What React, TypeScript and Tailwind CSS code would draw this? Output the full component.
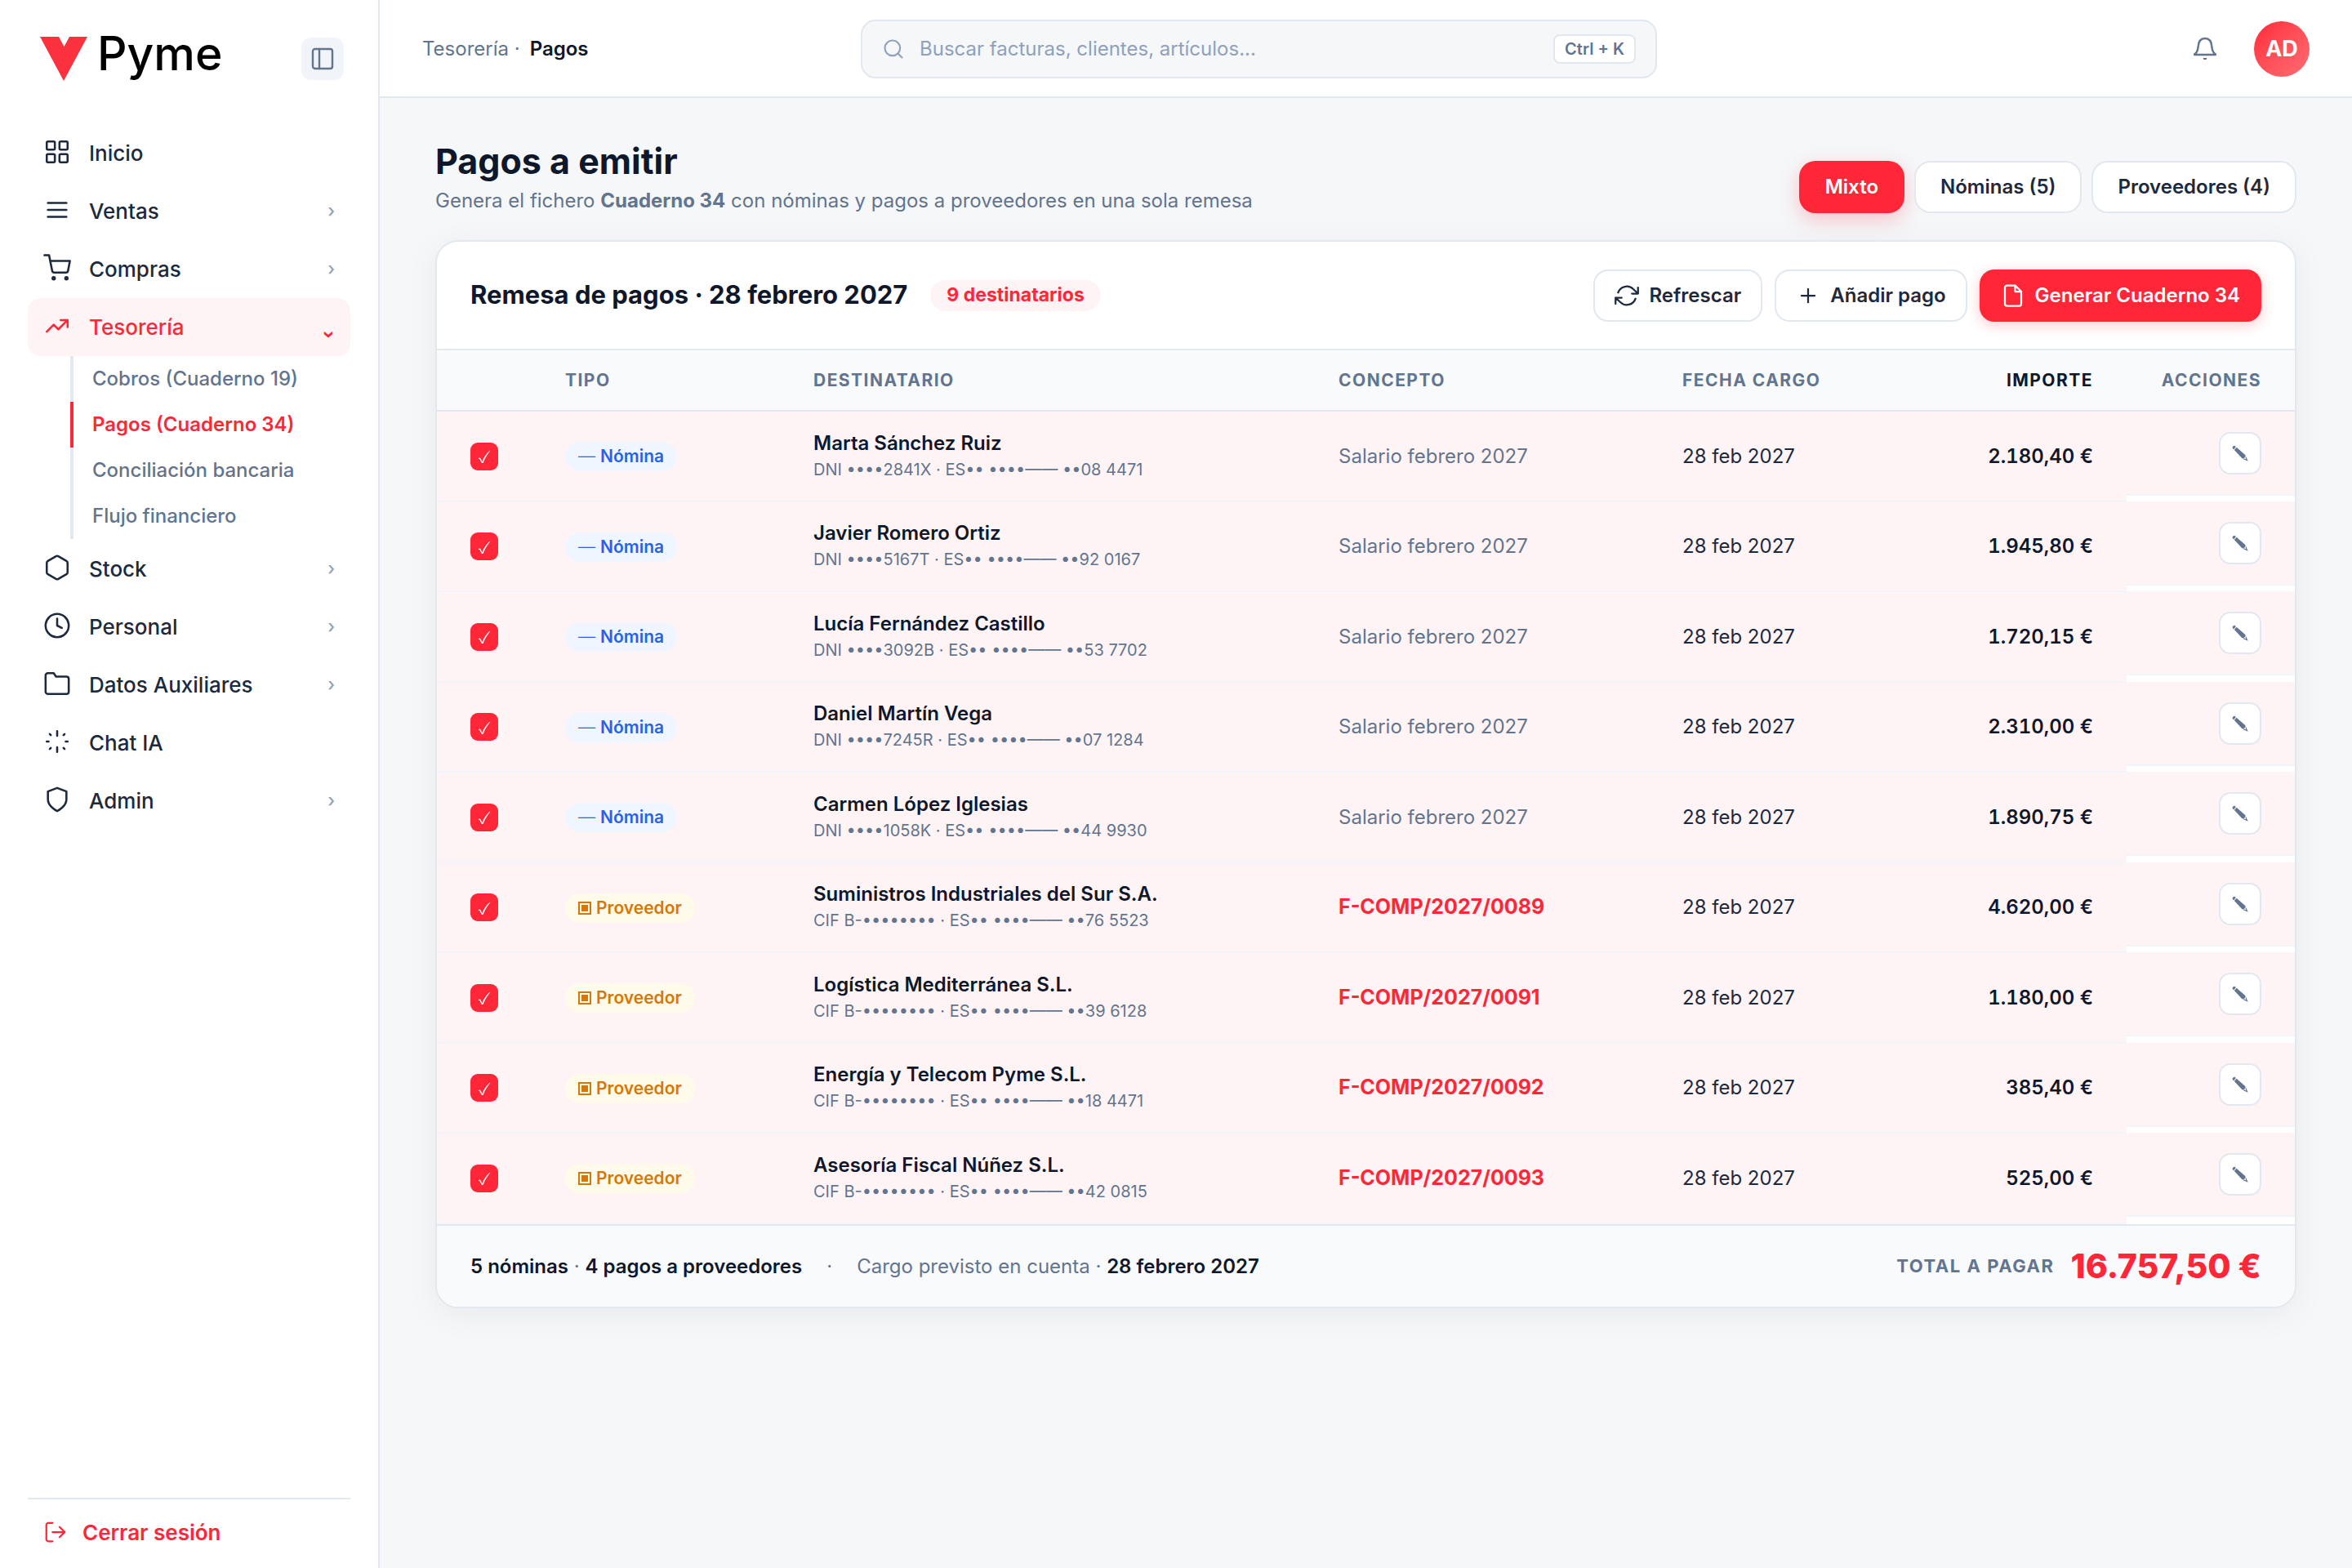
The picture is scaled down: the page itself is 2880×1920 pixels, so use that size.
import type { ReactNode } from "react";

const Icon = ({ size, children }: { size: number; children: ReactNode }) => (
  <svg
    width={size}
    height={size}
    viewBox="0 0 24 24"
    fill="none"
    stroke="currentColor"
    strokeWidth={1.8}
    strokeLinecap="round"
    strokeLinejoin="round"
    className="shrink-0"
    aria-hidden="true"
  >
    {children}
  </svg>
);

const menus = [
  {
    title: "Inicio",
    icon: (
      <>
        <rect x="3" y="3" width="7" height="7" rx="1" />
        <rect x="14" y="3" width="7" height="7" rx="1" />
        <rect x="3" y="14" width="7" height="7" rx="1" />
        <rect x="14" y="14" width="7" height="7" rx="1" />
      </>
    ),
  },
  { title: "Ventas", arrow: true, icon: <path d="M4 6h16M4 12h16M4 18h16" /> },
  {
    title: "Compras",
    arrow: true,
    icon: (
      <>
        <circle cx="9" cy="21" r="1" />
        <circle cx="20" cy="21" r="1" />
        <path d="M1 1h4l2.68 13.39a2 2 0 0 0 2 1.61h9.72a2 2 0 0 0 2-1.61L23 6H6" />
      </>
    ),
  },
  {
    title: "Tesorería",
    arrow: true,
    icon: <path d="M3 17l6-6 4 4 8-8M15 7h6v6" />,
    children: ["Cobros (Cuaderno 19)", "Pagos (Cuaderno 34)", "Conciliación bancaria", "Flujo financiero"],
  },
  {
    title: "Stock",
    arrow: true,
    icon: (
      <path d="M21 16V8a2 2 0 0 0-1-1.73l-7-4a2 2 0 0 0-2 0l-7 4A2 2 0 0 0 3 8v8a2 2 0 0 0 1 1.73l7 4a2 2 0 0 0 2 0l7-4A2 2 0 0 0 21 16z" />
    ),
  },
  {
    title: "Personal",
    arrow: true,
    icon: (
      <>
        <circle cx="12" cy="12" r="10" />
        <path d="M12 6v6l4 2" />
      </>
    ),
  },
  {
    title: "Datos Auxiliares",
    arrow: true,
    icon: <path d="M22 19a2 2 0 0 1-2 2H4a2 2 0 0 1-2-2V5a2 2 0 0 1 2-2h5l2 3h9a2 2 0 0 1 2 2z" />,
  },
  {
    title: "Chat IA",
    icon: (
      <path d="M12 3v4M12 17v4M3 12h1.600M19.400 12h1.600M5.600 5.600l.9.9M17.500 17.500l.9.9M5.600 18.400l.9-.9M17.500 6.500l.9-.9" />
    ),
  },
  { title: "Admin", arrow: true, icon: <path d="M12 22s8-4 8-10V5l-8-3-8 3v7c0 6 8 10 8 10z" /> },
];

const pagos = [
  { tipo: "nomina", nombre: "Marta Sánchez Ruiz", cuenta: "DNI ••••2841X · ES•• ••••—— ••08 4471", concepto: "Salario febrero 2027", importe: "2.180,40 €" },
  { tipo: "nomina", nombre: "Javier Romero Ortiz", cuenta: "DNI ••••5167T · ES•• ••••—— ••92 0167", concepto: "Salario febrero 2027", importe: "1.945,80 €" },
  { tipo: "nomina", nombre: "Lucía Fernández Castillo", cuenta: "DNI ••••3092B · ES•• ••••—— ••53 7702", concepto: "Salario febrero 2027", importe: "1.720,15 €" },
  { tipo: "nomina", nombre: "Daniel Martín Vega", cuenta: "DNI ••••7245R · ES•• ••••—— ••07 1284", concepto: "Salario febrero 2027", importe: "2.310,00 €" },
  { tipo: "nomina", nombre: "Carmen López Iglesias", cuenta: "DNI ••••1058K · ES•• ••••—— ••44 9930", concepto: "Salario febrero 2027", importe: "1.890,75 €" },
  { tipo: "proveedor", nombre: "Suministros Industriales del Sur S.A.", cuenta: "CIF B-•••••••• · ES•• ••••—— ••76 5523", concepto: "F-COMP/2027/0089", importe: "4.620,00 €" },
  { tipo: "proveedor", nombre: "Logística Mediterránea S.L.", cuenta: "CIF B-•••••••• · ES•• ••••—— ••39 6128", concepto: "F-COMP/2027/0091", importe: "1.180,00 €" },
  { tipo: "proveedor", nombre: "Energía y Telecom Pyme S.L.", cuenta: "CIF B-•••••••• · ES•• ••••—— ••18 4471", concepto: "F-COMP/2027/0092", importe: "385,40 €" },
  { tipo: "proveedor", nombre: "Asesoría Fiscal Núñez S.L.", cuenta: "CIF B-•••••••• · ES•• ••••—— ••42 0815", concepto: "F-COMP/2027/0093", importe: "525,00 €" },
];

const Sidebar = () => (
  <aside className="flex w-[465px] shrink-0 flex-col border-r-2 border-slate-200 bg-white px-[34px]">
    {/* LOGO */}
    <div className="flex items-center justify-between pt-[45px] pr-2 pl-[15px]">
      <div className="flex h-[54px] items-start gap-3">
        <svg width="58" height="54" viewBox="0 0 58 54" aria-hidden="true">
          <path d="M0 0h23l6.500 12L36 0h22L29 54z" fill="#fb323e" />
        </svg>
        <span className="text-[57px] leading-[42px] font-medium text-black">Pyme</span>
      </div>
      <button
        aria-label="Contraer menú"
        className="flex size-[52px] items-center justify-center rounded-xl bg-slate-100 text-slate-500"
      >
        <Icon size={32}>
          <rect x="3" y="3" width="18" height="18" rx="2" />
          <path d="M9 3v18" />
        </Icon>
      </button>
    </div>

    {/* NAVIGATION */}
    <nav className="mt-[53px] flex-1">
      {menus.map((menu) => (
        <div key={menu.title}>
          <a
            href="#"
            className={`flex h-[71px] items-center gap-[22px] rounded-2xl px-[19px] text-[26px] font-medium ${
              menu.children ? "bg-[#fff4f5] text-[#ff2638]" : "text-slate-800"
            }`}
          >
            <span className="pb-[3px]">
              <Icon size={34}>{menu.icon}</Icon>
            </span>
            <span className="flex-1">{menu.title}</span>
            {menu.arrow && (
              <span
                className={`w-4 text-right text-[22px] ${menu.children ? "mt-3 rotate-90 font-bold" : "text-slate-400"}`}
              >
                ›
              </span>
            )}
          </a>
          {menu.children && (
            <div className="ml-[52px] pb-px">
              {menu.children.map((child) => (
                <a
                  key={child}
                  href="#"
                  className={`flex h-14 items-center border-l-4 pl-[23px] text-[24px] ${
                    child.startsWith("Pagos")
                      ? "border-[#ff2638] font-semibold text-[#ff2638]"
                      : "border-slate-200 font-medium text-slate-500"
                  }`}
                >
                  {child}
                </a>
              ))}
            </div>
          )}
        </div>
      ))}
    </nav>

    <div className="border-t-2 border-slate-200 pb-1">
      <button className="flex h-[80px] w-full items-center gap-[18px] px-[19px] text-[26px] font-semibold text-[#ff2638]">
        <Icon size={30}>
          <path d="M9 21H5a2 2 0 0 1-2-2V5a2 2 0 0 1 2-2h4M16 17l5-5-5-5M21 12H9" />
        </Icon>
        Cerrar sesión
      </button>
    </div>
  </aside>
);

const Topbar = () => (
  <header className="grid h-[120px] grid-cols-[537px_975px_1fr] items-center border-b-2 border-slate-200 bg-white px-[52px] pt-0.5">
    <p className="flex items-center gap-3 text-[24px] text-slate-500">
      <span>Tesorería ·</span>
      <strong className="font-semibold text-slate-900">Pagos</strong>
    </p>
    <div className="flex h-[72px] items-center gap-[18px] rounded-[18px] border-2 border-slate-200 bg-[#f5f7f9] px-6 text-slate-400">
      <Icon size={28}>
        <circle cx="11" cy="11" r="8" />
        <path d="M21 21l-4.300-4.300" />
      </Icon>
      <input
        type="text"
        aria-label="Buscar"
        placeholder="Buscar facturas, clientes, artículos..."
        className="min-w-0 flex-1 bg-transparent text-[24px] outline-none placeholder:text-slate-400"
      />
      <kbd className="flex h-9 items-center rounded-lg border-2 border-slate-200 bg-white px-3 font-[Inter,sans-serif] text-[20px] font-semibold text-slate-500">
        Ctrl + K
      </kbd>
    </div>
    <div className="flex items-center justify-end gap-[44px]">
      <button aria-label="Notificaciones" className="text-slate-500">
        <svg width="32" height="32" viewBox="0 0 24 24" fill="none" stroke="currentColor" strokeWidth="1.800" aria-hidden="true">
          <path d="M1.800 17.200h20.400c-2.600-1.300-3.600-3-3.900-7.200-.3-4.500-2.300-7.800-6.300-7.800S6 5.500 5.700 10c-.3 4.200-1.300 5.900-3.900 7.200z" />
          <path d="M10.200 20.200h3.600a1.800 1.800 0 0 1-3.600 0z" fill="currentColor" stroke="none" />
        </svg>
      </button>
      <div className="flex size-[68px] items-center justify-center rounded-full bg-linear-135 from-[#ff2638] to-[#ff6b75] text-[27px] font-bold text-white">
        AD
      </div>
    </div>
  </header>
);

const outlineButton =
  "flex h-16 items-center gap-3 rounded-[18px] border-2 border-slate-200 bg-white px-6 text-[24px] font-semibold text-slate-800";

const Remesa = () => (
  <section className="mt-[33px] overflow-hidden rounded-[28px] border-2 border-slate-200 bg-white shadow-[0_8px_40px_rgba(15,23,42,0.06)]">
    <div className="flex h-[133px] items-center justify-between border-b-2 border-slate-200 px-[41px]">
      <div className="flex items-center gap-7">
        <h2 className="text-[31px] font-bold text-slate-900">Remesa de pagos · 28 febrero 2027</h2>
        <span className="flex h-[38px] items-center rounded-full bg-[#fff4f5] px-5 text-[23px] font-bold text-[#ff2638]">
          9 destinatarios
        </span>
      </div>
      <div className="flex gap-[15px]">
        <button className={outlineButton}>
          <Icon size={30}>
            <path d="M23 4v6h-6M1 20v-6h6M3.510 9a9 9 0 0 1 14.850-3.360L23 10M1 14l4.640 4.360A9 9 0 0 0 20.490 15" />
          </Icon>
          Refrescar
        </button>
        <button className={outlineButton}>
          <Icon size={30}>
            <path d="M12 5.500v13M5.500 12h13" />
          </Icon>
          Añadir pago
        </button>
        <button className="flex h-16 items-center gap-3 rounded-[18px] bg-[#ff2638] px-[26px] text-[24px] font-semibold text-white shadow-[0_4px_16px_rgba(255,38,56,0.25)]">
          <Icon size={30}>
            <path d="M14 2H6a2 2 0 0 0-2 2v16a2 2 0 0 0 2 2h12a2 2 0 0 0 2-2V8zM14 2v6h6" />
          </Icon>
          Generar Cuaderno 34
        </button>
      </div>
    </div>

    <table className="w-full table-fixed text-left">
      <colgroup>
        <col className="w-[116px]" />
        <col className="w-[304px]" />
        <col />
        <col className="w-[421px]" />
        <col className="w-[320px]" />
        <col className="w-[265px]" />
        <col className="w-[206px]" />
      </colgroup>
      <thead>
        <tr className="h-[74px] border-b-2 border-slate-200 bg-slate-50 text-[21px] tracking-[0.07em] text-slate-500 uppercase">
          <th />
          <th className="px-[41px] font-bold">Tipo</th>
          <th className="px-[41px] font-bold">Destinatario</th>
          <th className="px-[41px] font-bold">Concepto</th>
          <th className="px-[41px] font-bold">Fecha cargo</th>
          <th className="px-[41px] text-right font-bold text-slate-900">Importe</th>
          <th className="px-[41px] text-right font-bold">Acciones</th>
        </tr>
      </thead>
      <tbody className="text-[24px]">
        {pagos.map((pago) => (
          <tr key={pago.nombre} className="odd:h-[111px] even:h-[110px]">
            <td className="border-b-2 border-slate-100 bg-[#fff4f5] pl-[41px]">
              <label className="grid size-[34px] place-items-center">
                <input
                  type="checkbox"
                  defaultChecked
                  aria-label={pago.nombre}
                  className="col-start-1 row-start-1 size-[34px] appearance-none rounded-[9px] bg-[#ff2638]"
                />
                <svg
                  width="16"
                  height="19"
                  viewBox="0 0 16 19"
                  className="pointer-events-none col-start-1 row-start-1"
                  aria-hidden="true"
                >
                  <path
                    d="M.8 12.300c1.200-1 2.200-.9 2.800.3l1.800 3.600C7.700 10.600 10.900 6 15 2.600l.3.5C11.900 7.200 8.900 12 6.500 18H4.800L2.300 13.100c-.3-.5-.7-.5-1.300-.1z"
                    fill="#fff"
                  />
                </svg>
              </label>
            </td>
            <td className="border-b-2 border-slate-100 bg-[#fff4f5] px-[41px]">
              {pago.tipo === "nomina" ? (
                <span className="inline-flex h-9 items-center gap-1.5 rounded-full bg-[#eff6ff] px-4 align-middle text-[21px] font-semibold text-[#2563eb]">
                  <span className="font-light">—</span>
                  Nómina
                </span>
              ) : (
                <span className="inline-flex h-9 items-center gap-1.5 rounded-full bg-[#fffbeb] px-4 align-middle text-[21px] font-semibold text-[#d97706]">
                  <svg width="16" height="16" viewBox="0 0 16 16" aria-hidden="true">
                    <rect x="1" y="1" width="14" height="14" fill="none" stroke="currentColor" strokeWidth="2" />
                    <rect x="4" y="4" width="8" height="8" fill="currentColor" />
                  </svg>
                  Proveedor
                </span>
              )}
            </td>
            <td className="border-b-2 border-slate-100 bg-[#fff4f5] px-[41px]">
              <p className="leading-8 font-semibold text-slate-900">{pago.nombre}</p>
              <p className="text-[20px] leading-8 text-slate-500">{pago.cuenta}</p>
            </td>
            <td className="border-b-2 border-slate-100 bg-[#fff4f5] px-[41px]">
              {pago.tipo === "nomina" ? (
                <span className="text-slate-500">{pago.concepto}</span>
              ) : (
                <a href="#" className="text-[25px] font-bold text-[#ff2638]">
                  {pago.concepto}
                </a>
              )}
            </td>
            <td className="border-b-2 border-slate-100 bg-[#fff4f5] px-[41px] text-slate-800">28 feb 2027</td>
            <td className="border-b-2 border-slate-100 bg-[#fff4f5] px-[41px] text-right font-semibold text-slate-900 tabular-nums">
              {pago.importe}
            </td>
            <td className="align-top">
              <div className="flex h-[103px] items-center justify-end border-b-2 border-slate-100 bg-[#fff4f5] px-[41px]">
                <button
                  aria-label={`Editar ${pago.nombre}`}
                  className="flex size-[52px] items-center justify-center rounded-[14px] border-2 border-slate-200 bg-white text-slate-500"
                >
                  <svg width="20" height="20" viewBox="0 0 18 18" fill="currentColor" aria-hidden="true">
                    <path d="M.7 2.200Q1.400.5 3.100.7l1.200 1.200L1.900 4.900.7 3.700z" />
                    <path d="M5 2.500l9.600 8.200.5 1.700-2.100 2.500-1.800-.3-8.600-9.200z" />
                    <path d="M15.600 12.800l2.100 4.900-5.100-2.200.7-.8 2.400 1-.9-2.100z" />
                  </svg>
                </button>
              </div>
            </td>
          </tr>
        ))}
      </tbody>
    </table>

    <div className="flex h-[101px] items-center justify-between border-t-2 border-slate-200 bg-slate-50 px-[41px] text-[24px] text-slate-500">
      <p className="flex gap-[30px]">
        <span>
          <strong className="font-semibold text-slate-900">5 nóminas</strong> ·{" "}
          <strong className="font-semibold text-slate-900">4 pagos a proveedores</strong>
        </span>
        <span>·</span>
        <span>
          Cargo previsto en cuenta · <strong className="font-semibold text-slate-900">28 febrero 2027</strong>
        </span>
      </p>
      <p className="flex items-center gap-5">
        <span className="text-[22px] font-bold tracking-[0.07em] uppercase">Total a pagar</span>
        <strong className="text-[41px] font-extrabold text-[#ff2638]">16.757,50 €</strong>
      </p>
    </div>
  </section>
);

export default function App() {
  return (
    <div className="flex min-h-screen bg-[#f5f7f9] font-[Inter,sans-serif]">
      <Sidebar />
      <div className="min-w-0 flex-1">
        <Topbar />
        <main className="px-[68px] pt-[50px]">
          <div className="flex items-end justify-between">
            <div>
              <h1 className="text-[43px] leading-[54px] font-bold text-slate-900">Pagos a emitir</h1>
              <p className="mt-[7px] text-[24px] leading-[30px] text-slate-500">
                Genera el fichero <strong className="font-bold">Cuaderno 34</strong> con nóminas y pagos a proveedores
                en una sola remesa
              </p>
            </div>
            <div className="flex gap-3">
              <button className="flex h-16 items-center rounded-[20px] bg-[#ff2638] px-8 text-[24px] font-semibold text-white shadow-[0_8px_24px_rgba(255,38,56,0.25)]">
                Mixto
              </button>
              <button className="flex h-16 items-center rounded-[20px] border-2 border-slate-200 bg-white px-[30px] text-[24px] font-semibold text-slate-800">
                Nóminas (5)
              </button>
              <button className="flex h-16 items-center rounded-[20px] border-2 border-slate-200 bg-white px-[30px] text-[24px] font-semibold text-slate-800">
                Proveedores (4)
              </button>
            </div>
          </div>
          <Remesa />
        </main>
      </div>
    </div>
  );
}
